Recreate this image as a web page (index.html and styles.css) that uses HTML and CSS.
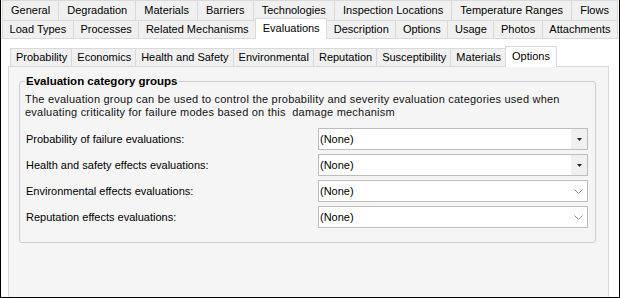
FILE: index.html
```html
<!DOCTYPE html>
<html lang="en">

<head>
    <meta charset="UTF-8" />
    <title>Damage Mechanism - Evaluations</title>
    <link rel="stylesheet" href="styles.css">
</head>

<body>
    <div class="window">
        <div class="tabs outer-tabs">
            <div class="tab-row">
                <div class="tab">General</div>
                <div class="tab">Degradation</div>
                <div class="tab">Materials</div>
                <div class="tab">Barriers</div>
                <div class="tab">Technologies</div>
                <div class="tab">Inspection Locations</div>
                <div class="tab">Temperature Ranges</div>
                <div class="tab">Flows</div>
            </div>
            <div class="tab-row second">
                <div class="tab">Load Types</div>
                <div class="tab">Processes</div>
                <div class="tab">Related Mechanisms</div>
                <div class="tab active">Evaluations</div>
                <div class="tab">Description</div>
                <div class="tab">Options</div>
                <div class="tab">Usage</div>
                <div class="tab">Photos</div>
                <div class="tab">Attachments</div>
            </div>
        </div>

        <div class="page">
            <div class="inner-tabs">
                <div class="itab">Probability</div>
                <div class="itab">Economics</div>
                <div class="itab">Health and Safety</div>
                <div class="itab">Environmental</div>
                <div class="itab">Reputation</div>
                <div class="itab">Susceptibility</div>
                <div class="itab">Materials</div>
                <div class="itab active">Options</div>
            </div>

            <div class="inner-page">
                <fieldset class="group">
                    <legend>Evaluation category groups</legend>
                    <p class="desc">The evaluation group can be used to control the probability and severity evaluation categories used when evaluating criticality for failure modes based on this&nbsp; damage mechanism</p>

                    <div class="fields">
                        <label>Probability of failure evaluations:</label>
                        <div class="combo">
                            <span class="value">(None)</span>
                            <span class="drop-btn">
                                <svg width="5" height="3" viewBox="0 0 5 3"><path d="M0 0h5L2.5 3z" fill="#222" /></svg>
                            </span>
                        </div>

                        <label>Health and safety effects evaluations:</label>
                        <div class="combo">
                            <span class="value">(None)</span>
                            <span class="drop-btn">
                                <svg width="5" height="3" viewBox="0 0 5 3"><path d="M0 0h5L2.5 3z" fill="#222" /></svg>
                            </span>
                        </div>

                        <label>Environmental effects evaluations:</label>
                        <div class="combo">
                            <span class="value">(None)</span>
                            <span class="drop-chev">
                                <svg width="9" height="5" viewBox="0 0 9 5"><path d="M0.5 0.5L4.5 4.5L8.5 0.5" fill="none" stroke="#8a8a8a" stroke-width="1" /></svg>
                            </span>
                        </div>

                        <label>Reputation effects evaluations:</label>
                        <div class="combo">
                            <span class="value">(None)</span>
                            <span class="drop-chev">
                                <svg width="9" height="5" viewBox="0 0 9 5"><path d="M0.5 0.5L4.5 4.5L8.5 0.5" fill="none" stroke="#8a8a8a" stroke-width="1" /></svg>
                            </span>
                        </div>
                    </div>
                </fieldset>
            </div>
        </div>
    </div>
</body>

</html>
```

FILE: styles.css
```css
* {
    margin: 0;
    padding: 0;
    box-sizing: border-box;
}

body {
    font-family: 'Liberation Sans', Arial, sans-serif;
    font-size: 11px;
    color: #000;
    background: #fff;
}

.window {
    width: 620px;
    height: 298px;
    border: 1px solid #000;
    border-top: none;
    display: flex;
    flex-direction: column;
    overflow: hidden;
}

/* outer multi-row tab strip */
.outer-tabs {
    padding-left: 1px;
    padding-right: 2px;
}

.tab-row {
    display: flex;
    height: 20px;
}

.tab-row.second {
    height: 18px;
}

.tab {
    flex: 1 1 auto;
    display: flex;
    align-items: center;
    justify-content: center;
    padding: 0 6px 1px;
    margin-right: -1px;
    background: #f0f0f0;
    border: 1px solid #d9d9d9;
    border-bottom: none;
    white-space: nowrap;
}

.tab.active {
    background: #fff;
    margin-top: -2px;
    height: 21px;
    padding-bottom: 3px;
    position: relative;
    z-index: 1;
}

.page {
    flex: 1;
    border-top: 1px solid #d9d9d9;
    background: #fff;
    padding: 7px 10px 0 7px;
    display: flex;
    flex-direction: column;
}

/* inner tab strip */
.inner-tabs {
    display: flex;
    padding-left: 2px;
    height: 20px;
}

.itab {
    margin-top: 2px;
    height: 18px;
    padding: 0 4px 1px 5px;
    margin-right: -1px;
    display: flex;
    align-items: center;
    background: #f0f0f0;
    border: 1px solid #d9d9d9;
    border-bottom: none;
    white-space: nowrap;
}

.itab.active {
    background: #fff;
    margin-top: 0;
    height: 21px;
    padding: 0 6px 3px;
    position: relative;
    z-index: 1;
}

.inner-page {
    flex: 1;
    background: #f5f5f5;
    border: 1px solid #d9d9d9;
    border-bottom: none;
    padding: 8px 12px 0 10px;
}

.group {
    border: 1px solid #c9ccd1;
    border-radius: 3px;
    padding: 0 7px 14px 5px;
}

.group legend {
    font-weight: bold;
    font-size: 11.5px;
    line-height: 13px;
    padding: 0 2px 0 1px;
}

.desc {
    margin-top: 5px;
    line-height: 13px;
    letter-spacing: 0.22px;
    color: #111;
}

.fields {
    margin-top: 9px;
    display: grid;
    grid-template-columns: 293px 1fr;
    row-gap: 4px;
    align-items: center;
}

.fields label {
    padding-left: 1px;
}

.combo {
    height: 22px;
    border: 1px solid #bdbdbd;
    background: #fff;
    display: flex;
    align-items: center;
}

.combo .value {
    flex: 1;
    padding-left: 1px;
}

.drop-btn {
    width: 16px;
    height: 100%;
    background: #f0f0f0;
    display: flex;
    align-items: center;
    justify-content: center;
}

.drop-chev {
    width: 16px;
    height: 100%;
    display: flex;
    align-items: center;
    justify-content: center;
    padding-right: 2px;
}
```
